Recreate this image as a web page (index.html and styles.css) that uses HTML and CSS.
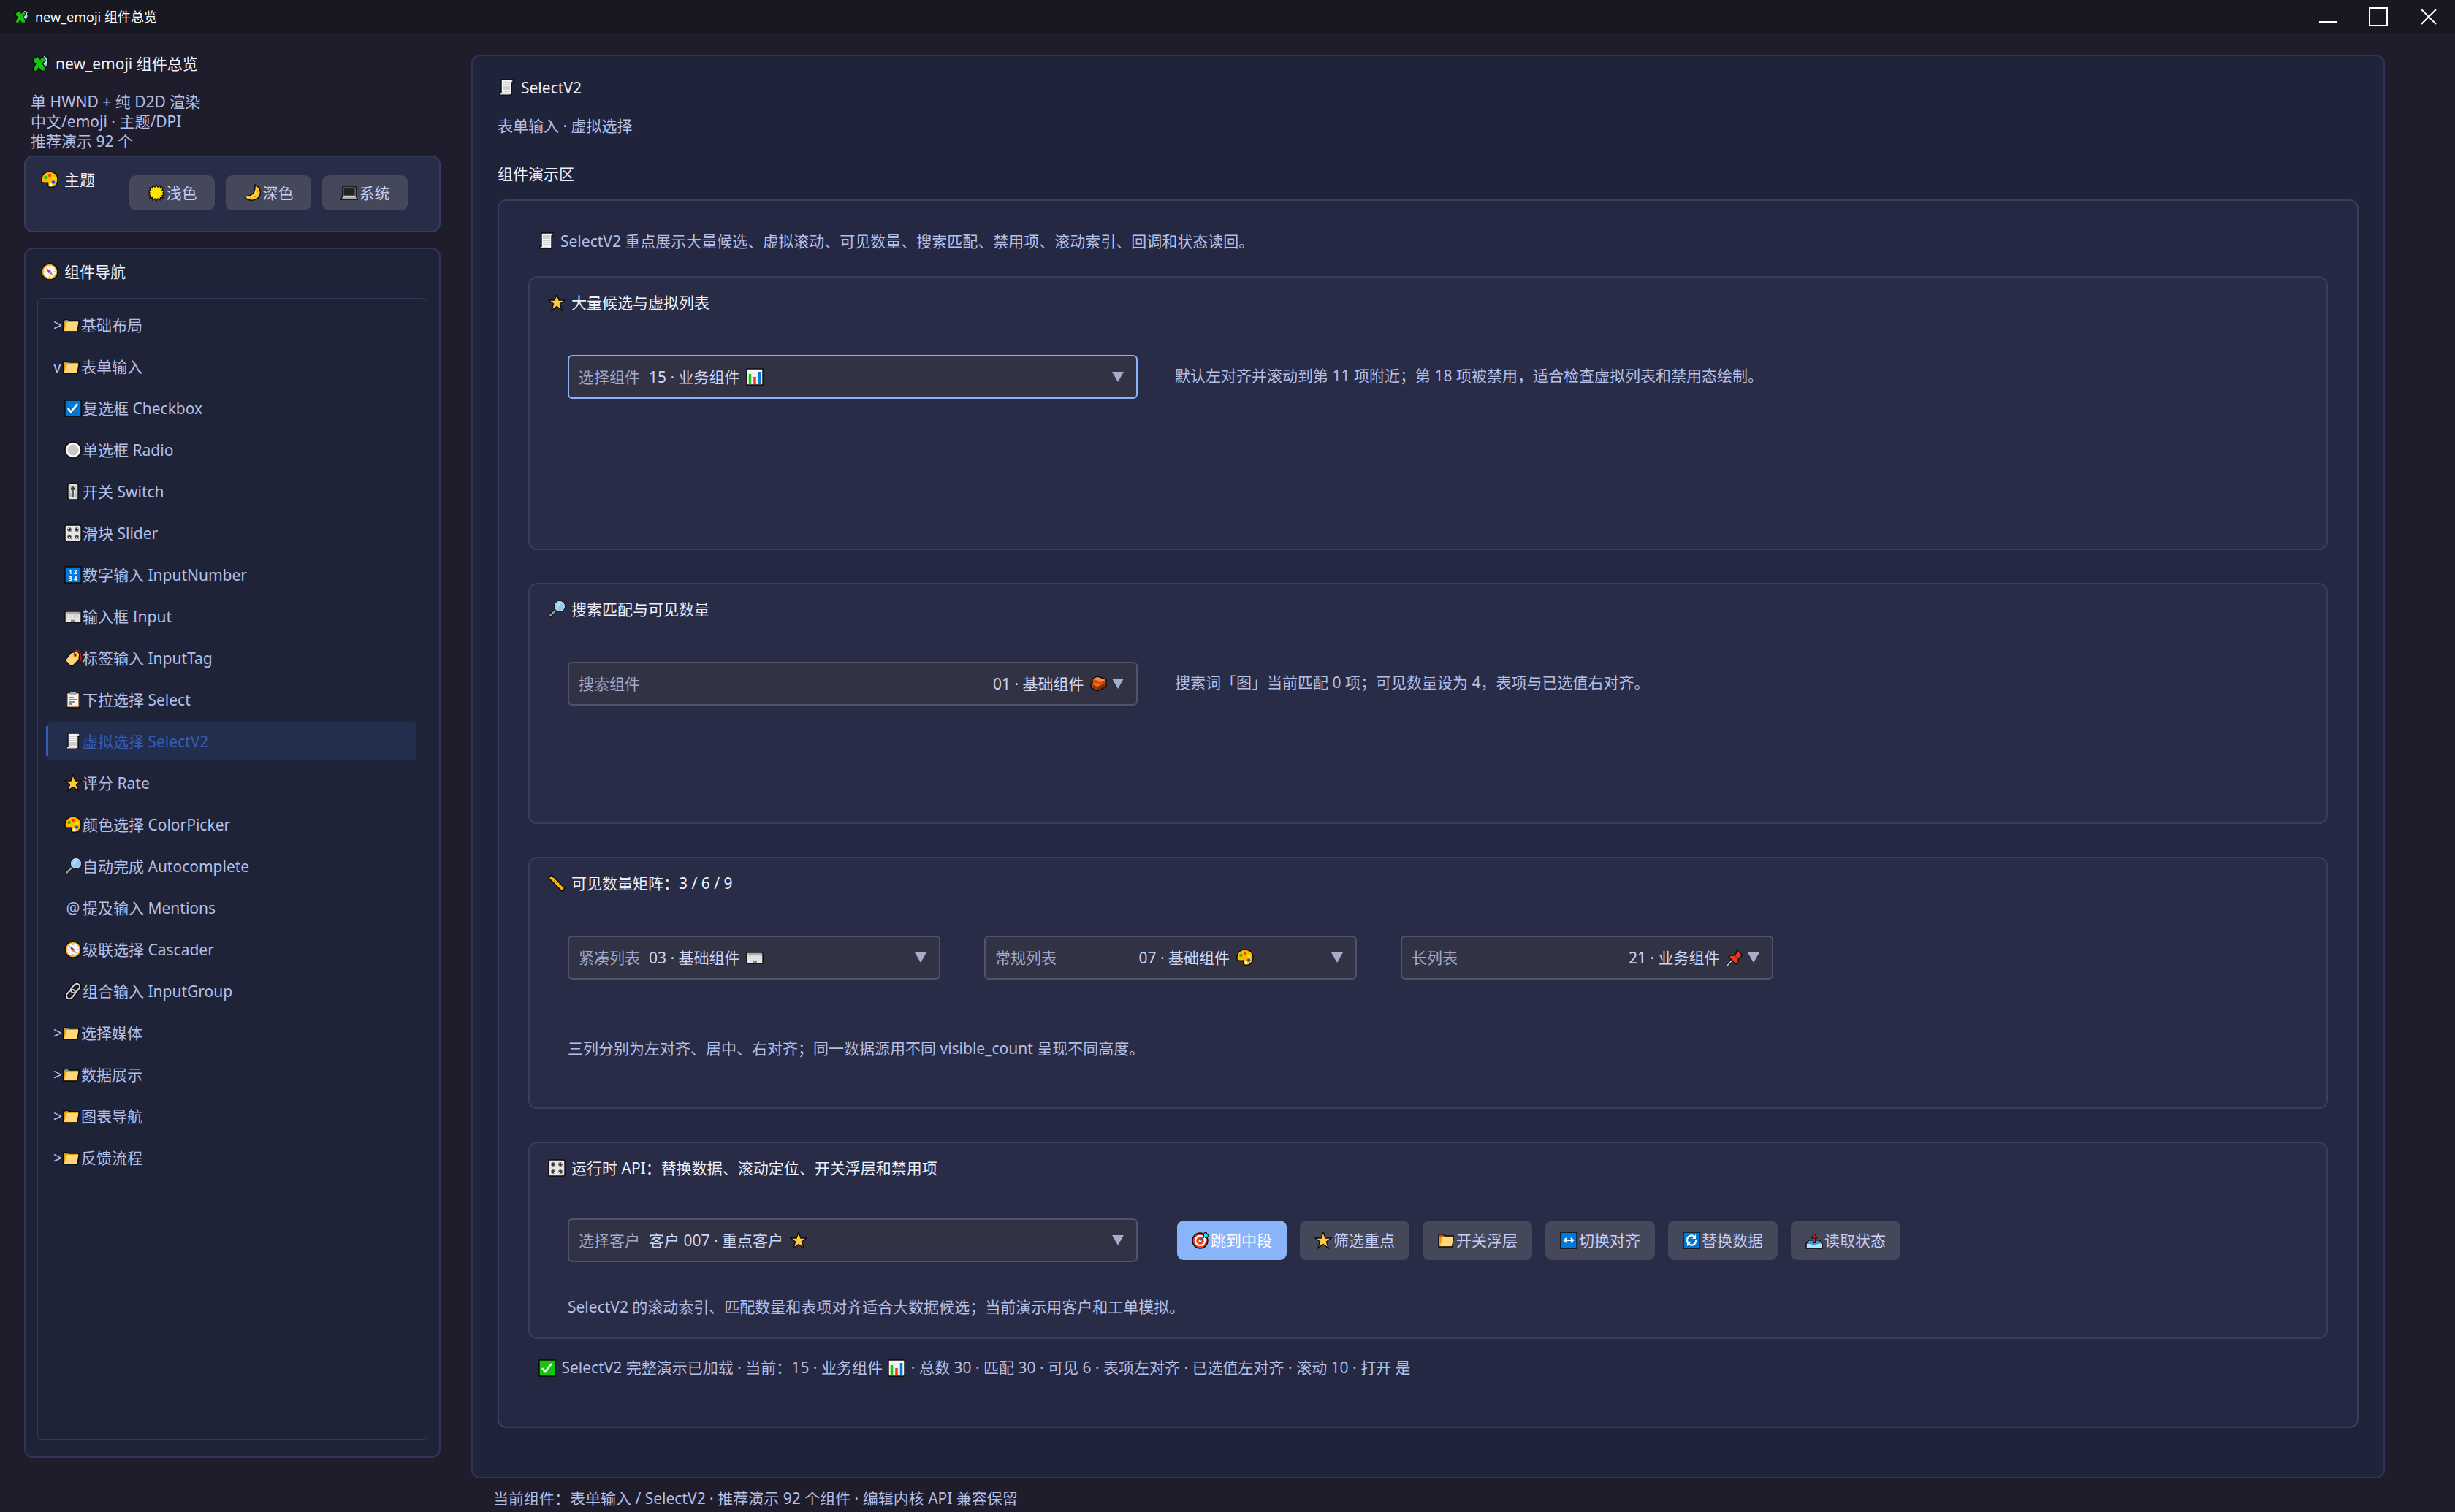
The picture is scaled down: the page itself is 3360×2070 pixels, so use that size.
FILE: index.html
```
<!DOCTYPE html>
<html lang="zh-CN">
<head>
    <meta charset="UTF-8">
    <meta name="viewport" content="width=device-width, initial-scale=1.0">
    <title>new_emoji 组件总览</title>
    <link rel="stylesheet" href="styles.css">
</head>
<body>

    <!-- Icon sprite -->
    <svg class="sprite" xmlns="http://www.w3.org/2000/svg" aria-hidden="true">
        <symbol id="puzzle" viewBox="0 0 24 24">
            <path d="M13 7l1-4 3-2 2 2 3 1-1 4 1 3-2 5-3 2-4-3z" fill="#b4d8ee" stroke="#0b0b0b" stroke-width="1.4"/>
            <path d="M18 6l-2 4M20 12l-2 3" stroke="#8fb0c6" stroke-width="1.5"/>
            <path d="M4 4l4-2 3 4 3-3 3 2 1 3-4 4 3 4 1 4-3 3-4-2-2-3-2 4-4 1-2-3 2-4 2-4-4-2 1-4z" fill="#16c60c" stroke="#0b0b0b" stroke-width="1.4"/>
            <path d="M11 7l2 2M3 19l1 2M15 20l2 1" stroke="#5b605d" stroke-width="2"/>
        </symbol>
        <symbol id="palette" viewBox="0 0 24 24">
            <path d="M12 1C5 1 1 6 1 11v4c2 2 5 1 8 1 2 1-1 5 2 6 7 2 12-3 12-11C23 5 18 1 12 1z" fill="#ffb900" stroke="#0b0b0b" stroke-width="1.4"/>
            <circle cx="12" cy="6" r="2.2" fill="#f03a17"/>
            <circle cx="6.500" cy="9" r="2.200" fill="#16c60c"/>
            <circle cx="17.500" cy="10" r="2.200" fill="#fde300"/>
            <circle cx="17" cy="15.500" r="2.200" fill="#0063e0"/>
            <circle cx="13.500" cy="19" r="2" fill="#fff"/>
        </symbol>
        <symbol id="sun" viewBox="0 0 24 24">
            <path d="M12 1l2 3 3-2 .5 3.500 3.500-.5-1 3.500 3 1-2 2.500 2 2.500-3 1 1 3.500-3.500-.5-.5 3.500-3-2-2 3-2-3-3 2-.5-3.500-3.500.5 1-3.500-3-1 2-2.500-2-2.500 3-1-1-3.500 3.500.5L7 2l3 2z" fill="#fde300" stroke="#0b0b0b" stroke-width="1.300"/>
            <circle cx="12" cy="12" r="6.500" fill="#ffe600"/>
        </symbol>
        <symbol id="moon" viewBox="0 0 24 24">
            <path d="M15 1c8 4 10 13 3 19-6 4-14 2-17-2 1-2 6-1 10-4 5-4 4-9 4-13z" fill="#ffc83d" stroke="#0b0b0b" stroke-width="1.400"/>
            <circle cx="19" cy="10" r="1.500" fill="#e8a520"/>
            <circle cx="15" cy="17" r="1.500" fill="#e8a520"/>
            <circle cx="9" cy="19" r="1" fill="#e8a520"/>
        </symbol>
        <symbol id="laptop" viewBox="0 0 24 24">
            <path d="M3 4h18v12l2 5H1l2-5z" fill="#cccccc" stroke="#0b0b0b" stroke-width="1.400"/>
            <path d="M4 5h16v11H4z" fill="#222" stroke="#777" stroke-width="1"/>
            <path d="M2 19h20" stroke="#888"/>
        </symbol>
        <symbol id="compass" viewBox="0 0 24 24">
            <circle cx="12" cy="12" r="11" fill="#f3a81c" stroke="#0b0b0b" stroke-width="1.300"/>
            <circle cx="12" cy="12" r="8.500" fill="#f7f7f7"/>
            <path d="M12 4v2M12 18v2M4 12h2M18 12h2" stroke="#999" stroke-width="1.200"/>
            <path d="M7 7l6.500 4-3 3z" fill="#e22b39"/>
            <path d="M17 18l-6.500-4 3-3z" fill="#999"/>
        </symbol>
        <symbol id="folder" viewBox="0 0 24 24">
            <path d="M1 5h6l2 1h13v4l-2 11H1z" fill="#e69f0b" stroke="#0b0b0b" stroke-width="1.600"/>
            <path d="M3 5h4l1 2H3z" fill="#3a96dd"/>
            <path d="M5 8h16l-2 12H2z" fill="#ffd67a"/>
        </symbol>
        <symbol id="folder-open" viewBox="0 0 24 24">
            <path d="M2 4h6l2 2h12v4l-2 11H2z" fill="#e69f0b" stroke="#0b0b0b" stroke-width="1.400"/>
            <path d="M3 5h5l1 2H3z" fill="#f03a17"/>
            <path d="M7 8h15l-2 12H4z" fill="#ffd67a"/>
        </symbol>
        <symbol id="check-blue" viewBox="0 0 24 24">
            <path d="M1 1h22v22H1z" fill="#0078d7" stroke="#0b0b0b" stroke-width="1.400"/>
            <path d="M5 12l4 5L18 6" fill="none" stroke="#fff" stroke-width="2.600"/>
        </symbol>
        <symbol id="check-green" viewBox="0 0 24 24">
            <path d="M1 1h22v22H1z" fill="#16c60c" stroke="#0b0b0b" stroke-width="1.400"/>
            <path d="M5 12l4 5L18 6" fill="none" stroke="#fff" stroke-width="2.600"/>
        </symbol>
        <symbol id="radio" viewBox="0 0 24 24">
            <circle cx="12" cy="12" r="11" fill="#cccccc" stroke="#0b0b0b" stroke-width="1.400"/>
            <circle cx="12" cy="12" r="8.500" fill="#c8c8c8" stroke="#fff" stroke-width="1.800"/>
        </symbol>
        <symbol id="level" viewBox="0 0 24 24">
            <rect x="5" y="1" width="14" height="22" rx="2" fill="#dedede" stroke="#0b0b0b" stroke-width="1.400"/>
            <path d="M7 5h3M7 9h3M7 12h3M7 15h3M7 18h3M14 5h3M14 9h3M14 12h3M14 15h3M14 18h3" stroke="#999"/>
            <path d="M12 4v16" stroke="#333" stroke-width="1.500"/>
            <path d="M9 8h6" stroke="#333" stroke-width="3"/>
        </symbol>
        <symbol id="knobs" viewBox="0 0 24 24">
            <rect x="1" y="1" width="22" height="22" rx="2" fill="#e6e6e6" stroke="#0b0b0b" stroke-width="1.400"/>
            <g fill="#333" stroke="#777" stroke-width="1">
                <circle cx="7" cy="7" r="2.500"/><circle cx="17" cy="7" r="2.500"/>
                <circle cx="7" cy="17" r="2.500"/><circle cx="17" cy="17" r="2.500"/>
            </g>
            <path d="M7 7l-2-2M17 7l2-2M7 17l2 2M17 17l-2 2" stroke="#fff"/>
            <path d="M9 10h1M19 10h1M9 20h1M19 20h1" stroke="#e74856"/>
        </symbol>
        <symbol id="keyboard" viewBox="0 0 24 24">
            <rect x="1" y="5" width="22" height="15" rx="1" fill="#e8e8e8" stroke="#0b0b0b" stroke-width="1.400"/>
            <path d="M2 7h20" stroke="#aaa" stroke-width="2"/>
            <path d="M3 10h18M3 13h18M4 16h16" stroke="#c4c4c4" stroke-dasharray="2 1"/>
            <path d="M9 18h6" stroke="#888" stroke-width="2.500"/>
            <path d="M2 7h2" stroke="#fde300"/><path d="M20 7h2" stroke="#e74856"/>
        </symbol>
        <symbol id="tag" viewBox="0 0 24 24">
            <path d="M1 15l8-10 8-3 4 4-1 8-9 9-3-1z" fill="#ffd67a" stroke="#0b0b0b" stroke-width="1.400"/>
            <circle cx="15" cy="8" r="3" fill="#e69f0b"/>
            <circle cx="15" cy="8" r="1.500" fill="#4a2410"/>
            <path d="M15 8c-3-5 0-7 4-6 4 2 4 8 3 14" fill="none" stroke="#b3231b" stroke-width="1.500"/>
        </symbol>
        <symbol id="clipboard" viewBox="0 0 24 24">
            <rect x="3" y="2" width="18" height="21" rx="2" fill="#b08a66" stroke="#0b0b0b" stroke-width="1.400"/>
            <path d="M5 4h14v17H5z" fill="#f5f5f5"/>
            <path d="M8 1h8v5H8z" fill="#aaa"/>
            <path d="M7 9h6M7 12h10M7 15h8M7 18h4" stroke="#666" stroke-width="1.300"/>
        </symbol>
        <symbol id="scroll" viewBox="0 0 24 24">
            <path d="M5 1h16v4h-2v17H3v-3h2z" fill="#f4f4f4" stroke="#0b0b0b" stroke-width="1.400"/>
            <path d="M7 5h10M7 8h10M7 11h10M7 14h10M7 17h10" stroke="#aaa" stroke-width="1.200"/>
            <path d="M18 3h2M4 21h12" stroke="#bbb"/>
        </symbol>
        <symbol id="star" viewBox="0 0 24 24">
            <path d="M12 1l3 8h8l-6.500 5 2.500 8.500-7-5-7 5L7.500 14 1 9h8z" fill="#ffc83d" stroke="#0b0b0b" stroke-width="1.400"/>
        </symbol>
        <symbol id="search" viewBox="0 0 24 24">
            <path d="M10 14l-8 8" stroke="#0b0b0b" stroke-width="5"/>
            <path d="M10 14l-7.500 7.500" stroke="#8d9aa0" stroke-width="2.600"/>
            <circle cx="16" cy="8" r="7.500" fill="#83c5f4" stroke="#0b0b0b"/>
            <circle cx="16" cy="8" r="6.300" fill="#8fcaf5" stroke="#c8d3da" stroke-width="1.200"/>
            <path d="M12 11c-1-5 2-8 6-7z" fill="#b9e0fa"/>
        </symbol>
        <symbol id="link" viewBox="0 0 24 24">
            <g fill="none" stroke="#0b0b0b" stroke-width="5">
                <rect x="8" y="4" width="14" height="8" rx="4" transform="rotate(-48 15 8)"/>
                <rect x="2" y="12" width="14" height="8" rx="4" transform="rotate(-48 9 16)"/>
            </g>
            <g fill="none" stroke="#cfcfcf" stroke-width="2.200">
                <rect x="8" y="4" width="14" height="8" rx="4" transform="rotate(-48 15 8)"/>
                <rect x="2" y="12" width="14" height="8" rx="4" transform="rotate(-48 9 16)"/>
            </g>
        </symbol>
        <symbol id="chart" viewBox="0 0 24 24">
            <path d="M1 1h22v22H1z" fill="#f5f5f5" stroke="#0b0b0b" stroke-width="1.400"/>
            <path d="M2 7h20M2 12h20M2 17h20" stroke="#ddd"/>
            <path d="M5.500 8v14" stroke="#16c60c" stroke-width="3.500"/>
            <path d="M12 12v10" stroke="#f03a17" stroke-width="3.500"/>
            <path d="M18.500 5v17" stroke="#0078d7" stroke-width="3.500"/>
        </symbol>
        <symbol id="brick" viewBox="0 0 24 24">
            <path d="M3 5l7-3 12 4v10l-12 6-9-5v-5l2-1z" fill="#da5110" stroke="#0b0b0b" stroke-width="1.400"/>
            <path d="M4 5l6-2 11 4-6 3z" fill="#ff8c4b"/>
            <path d="M15 10l6-3v8l-6 3z" fill="#ca4508"/>
            <path d="M2 13l8 3v5l-8-4z" fill="#8e3a14"/>
            <path d="M10 16l11-4v4l-11 5z" fill="#7a3010"/>
            <path d="M3 12l3-1 8 3-4 2z" fill="#f7701f"/>
        </symbol>
        <symbol id="ruler" viewBox="0 0 24 24">
            <path d="M1 5l4-4 18 18-4 4z" fill="#ffb900" stroke="#0b0b0b" stroke-width="1.500"/>
            <path d="M7 4l-2 2M10 7l-2 2M13 10l-2 2M16 13l-2 2M19 16l-2 2" stroke="#9c6c00"/>
        </symbol>
        <symbol id="pin" viewBox="0 0 24 24">
            <path d="M10 14l-8 9" stroke="#0b0b0b" stroke-width="3.500"/>
            <path d="M10 14l-8 9" stroke="#ddd" stroke-width="1.500"/>
            <path d="M15 1l8 8-3 2-3 3v5l-3 2L4 11l3-2h5l3-4z" fill="#f03a17" stroke="#0b0b0b" stroke-width="1.300"/>
            <path d="M12 9l4 4" stroke="#a51d0b" stroke-width="1.500"/>
        </symbol>
        <symbol id="target" viewBox="0 0 24 24">
            <circle cx="11.500" cy="12.500" r="10.500" fill="#f03a17" stroke="#0b0b0b" stroke-width="1.300"/>
            <circle cx="11.500" cy="12.500" r="6.500" fill="none" stroke="#fff" stroke-width="2.500"/>
            <circle cx="11.500" cy="12.500" r="2" fill="#fff"/>
            <path d="M12 12l7-7" stroke="#0b6ab0" stroke-width="2"/>
            <path d="M16 7l1-5 3-1 1 3 2 1-2 4z" fill="#31d2f7" stroke="#0b0b0b"/>
        </symbol>
        <symbol id="swap" viewBox="0 0 24 24">
            <path d="M1 1h22v22H1z" fill="#0078d7" stroke="#0b0b0b" stroke-width="1.400"/>
            <path d="M6 12h12M9 9l-3 3 3 3M15 9l3 3-3 3" fill="none" stroke="#fff" stroke-width="2"/>
        </symbol>
        <symbol id="refresh" viewBox="0 0 24 24">
            <path d="M1 1h22v22H1z" fill="#0078d7" stroke="#0b0b0b" stroke-width="1.400"/>
            <path d="M17 8c-4-5-11-2-11 4 0 2 1 4 3 5M8 17c5 4 11 0 10-6" fill="none" stroke="#fff" stroke-width="2.200"/>
            <path d="M18 4v6h-5zM6 20v-5h5z" fill="#fff"/>
        </symbol>
        <symbol id="outbox" viewBox="0 0 24 24">
            <path d="M5 12h14l4 5v6H1v-6z" fill="#b4e0f7" stroke="#0b0b0b" stroke-width="1.400"/>
            <path d="M6 13h12l3 4h-5c-1 3-7 3-8 0H3z" fill="#3a96dd"/>
            <path d="M12 6v10" stroke="#0b0b0b" stroke-width="4"/>
            <path d="M12 5v10" stroke="#e81224" stroke-width="2.200"/>
            <path d="M8 9l4-6 4 6z" fill="#e81224" stroke="#0b0b0b"/>
        </symbol>
        <symbol id="caret" viewBox="0 0 16 14"><path d="M0 0h16L8 14z" fill="#a6adc8"/></symbol>
    </svg>

    <header class="titlebar">
        <svg class="icon"><use href="#puzzle"/></svg>
        <span class="titlebar-text">new_emoji 组件总览</span>
        <div class="window-controls">
            <button type="button" aria-label="最小化"><svg viewBox="0 0 28 28"><path d="M2 21h24"/></svg></button>
            <button type="button" aria-label="最大化"><svg viewBox="0 0 28 28"><path d="M2 2h24v24H2z"/></svg></button>
            <button type="button" aria-label="关闭"><svg viewBox="0 0 28 28"><path d="M4 4l20 20M24 4L4 24"/></svg></button>
        </div>
    </header>

    <div class="layout">
        <aside class="sidebar">
            <h1 class="brand"><svg class="icon"><use href="#puzzle"/></svg>new_emoji 组件总览</h1>
            <p class="about">单 HWND + 纯 D2D 渲染<br>中文/emoji · 主题/DPI<br>推荐演示 92 个</p>

            <section class="theme">
                <h2 class="title"><svg class="icon"><use href="#palette"/></svg>主题</h2>
                <div class="theme-buttons">
                    <button type="button" class="btn"><svg class="icon"><use href="#sun"/></svg>浅色</button>
                    <button type="button" class="btn"><svg class="icon"><use href="#moon"/></svg>深色</button>
                    <button type="button" class="btn"><svg class="icon"><use href="#laptop"/></svg>系统</button>
                </div>
            </section>

            <nav class="nav">
                <h2 class="title"><svg class="icon"><use href="#compass"/></svg>组件导航</h2>
                <div class="tree">
                    <a class="group" href="#"><span class="arrow">&gt;</span><svg class="icon"><use href="#folder"/></svg>基础布局</a>
                    <a class="group" href="#"><span class="arrow">v</span><svg class="icon"><use href="#folder"/></svg>表单输入</a>
                    <a class="leaf" href="#"><svg class="icon"><use href="#check-blue"/></svg>复选框 Checkbox</a>
                    <a class="leaf" href="#"><svg class="icon"><use href="#radio"/></svg>单选框 Radio</a>
                    <a class="leaf" href="#"><svg class="icon"><use href="#level"/></svg>开关 Switch</a>
                    <a class="leaf" href="#"><svg class="icon"><use href="#knobs"/></svg>滑块 Slider</a>
                    <a class="leaf" href="#">
                        <svg class="icon numbers" viewBox="0 0 24 24">
                            <path d="M1 1h22v22H1z" fill="#0078d7" stroke="#0b0b0b" stroke-width="1.400"/>
                            <text x="6" y="11">1 2</text>
                            <text x="6" y="20">3 4</text>
                        </svg>数字输入 InputNumber</a>
                    <a class="leaf" href="#"><svg class="icon"><use href="#keyboard"/></svg>输入框 Input</a>
                    <a class="leaf" href="#"><svg class="icon"><use href="#tag"/></svg>标签输入 InputTag</a>
                    <a class="leaf" href="#"><svg class="icon"><use href="#clipboard"/></svg>下拉选择 Select</a>
                    <a class="leaf active" href="#"><svg class="icon"><use href="#scroll"/></svg>虚拟选择 SelectV2</a>
                    <a class="leaf" href="#"><svg class="icon"><use href="#star"/></svg>评分 Rate</a>
                    <a class="leaf" href="#"><svg class="icon"><use href="#palette"/></svg>颜色选择 ColorPicker</a>
                    <a class="leaf" href="#"><svg class="icon"><use href="#search"/></svg>自动完成 Autocomplete</a>
                    <a class="leaf" href="#"><span class="at">@</span>提及输入 Mentions</a>
                    <a class="leaf" href="#"><svg class="icon"><use href="#compass"/></svg>级联选择 Cascader</a>
                    <a class="leaf" href="#"><svg class="icon"><use href="#link"/></svg>组合输入 InputGroup</a>
                    <a class="group" href="#"><span class="arrow">&gt;</span><svg class="icon"><use href="#folder"/></svg>选择媒体</a>
                    <a class="group" href="#"><span class="arrow">&gt;</span><svg class="icon"><use href="#folder"/></svg>数据展示</a>
                    <a class="group" href="#"><span class="arrow">&gt;</span><svg class="icon"><use href="#folder"/></svg>图表导航</a>
                    <a class="group" href="#"><span class="arrow">&gt;</span><svg class="icon"><use href="#folder"/></svg>反馈流程</a>
                </div>
            </nav>
        </aside>

        <div class="content">
            <main class="panel">
                <h2 class="title"><svg class="icon"><use href="#scroll"/></svg>SelectV2</h2>
                <p class="subtitle">表单输入 · 虚拟选择</p>
                <h3 class="section-label">组件演示区</h3>

                <div class="demo">
                    <p class="intro"><svg class="icon"><use href="#scroll"/></svg>SelectV2 重点展示大量候选、虚拟滚动、可见数量、搜索匹配、禁用项、滚动索引、回调和状态读回。</p>

                    <section class="card card-list">
                        <h3 class="title"><svg class="icon"><use href="#star"/></svg>大量候选与虚拟列表</h3>
                        <div class="row">
                            <div class="field wide focused">
                                <label for="component">选择组件</label>
                                <div class="value">
                                    <select id="component"><option>15 · 业务组件</option></select>
                                    <svg class="icon"><use href="#chart"/></svg>
                                </div>
                                <svg class="caret"><use href="#caret"/></svg>
                            </div>
                            <p class="desc">默认左对齐并滚动到第 11 项附近；第 18 项被禁用，适合检查虚拟列表和禁用态绘制。</p>
                        </div>
                    </section>

                    <section class="card card-search">
                        <h3 class="title"><svg class="icon"><use href="#search"/></svg>搜索匹配与可见数量</h3>
                        <div class="row">
                            <div class="field wide">
                                <label for="search-component">搜索组件</label>
                                <div class="value right">
                                    <select id="search-component"><option>01 · 基础组件</option></select>
                                    <svg class="icon"><use href="#brick"/></svg>
                                </div>
                                <svg class="caret"><use href="#caret"/></svg>
                            </div>
                            <p class="desc">搜索词「图」当前匹配 0 项；可见数量设为 4，表项与已选值右对齐。</p>
                        </div>
                    </section>

                    <section class="card card-matrix">
                        <h3 class="title"><svg class="icon"><use href="#ruler"/></svg>可见数量矩阵：3 / 6 / 9</h3>
                        <div class="row matrix">
                            <div class="field">
                                <label for="compact">紧凑列表</label>
                                <div class="value">
                                    <select id="compact"><option>03 · 基础组件</option></select>
                                    <svg class="icon"><use href="#keyboard"/></svg>
                                </div>
                                <svg class="caret"><use href="#caret"/></svg>
                            </div>
                            <div class="field">
                                <label for="regular">常规列表</label>
                                <div class="value center">
                                    <select id="regular"><option>07 · 基础组件</option></select>
                                    <svg class="icon"><use href="#palette"/></svg>
                                </div>
                                <svg class="caret"><use href="#caret"/></svg>
                            </div>
                            <div class="field">
                                <label for="long">长列表</label>
                                <div class="value right">
                                    <select id="long"><option>21 · 业务组件</option></select>
                                    <svg class="icon"><use href="#pin"/></svg>
                                </div>
                                <svg class="caret"><use href="#caret"/></svg>
                            </div>
                        </div>
                        <p class="note">三列分别为左对齐、居中、右对齐；同一数据源用不同 visible_count 呈现不同高度。</p>
                    </section>

                    <section class="card card-api">
                        <h3 class="title"><svg class="icon"><use href="#knobs"/></svg>运行时 API：替换数据、滚动定位、开关浮层和禁用项</h3>
                        <div class="row">
                            <div class="field wide">
                                <label for="customer">选择客户</label>
                                <div class="value">
                                    <select id="customer"><option>客户 007 · 重点客户</option></select>
                                    <svg class="icon"><use href="#star"/></svg>
                                </div>
                                <svg class="caret"><use href="#caret"/></svg>
                            </div>
                            <div class="actions">
                                <button type="button" class="btn primary"><svg class="icon"><use href="#target"/></svg>跳到中段</button>
                                <button type="button" class="btn"><svg class="icon"><use href="#star"/></svg>筛选重点</button>
                                <button type="button" class="btn"><svg class="icon"><use href="#folder-open"/></svg>开关浮层</button>
                                <button type="button" class="btn"><svg class="icon"><use href="#swap"/></svg>切换对齐</button>
                                <button type="button" class="btn"><svg class="icon"><use href="#refresh"/></svg>替换数据</button>
                                <button type="button" class="btn"><svg class="icon"><use href="#outbox"/></svg>读取状态</button>
                            </div>
                        </div>
                        <p class="note">SelectV2 的滚动索引、匹配数量和表项对齐适合大数据候选；当前演示用客户和工单模拟。</p>
                    </section>

                    <p class="status"><svg class="icon"><use href="#check-green"/></svg> SelectV2 完整演示已加载 · 当前：15 · 业务组件 <svg class="icon"><use href="#chart"/></svg> · 总数 30 · 匹配 30 · 可见 6 · 表项左对齐 · 已选值左对齐 · 滚动 10 · 打开 是</p>
                </div>
            </main>
            <footer class="footer">当前组件：表单输入 / SelectV2 · 推荐演示 92 个组件 · 编辑内核 API 兼容保留</footer>
        </div>
    </div>

</body>
</html>
```
FILE: styles.css
```
* {
    box-sizing: border-box;
}

body {
    display: flex;
    flex-direction: column;
    margin: 0;
    min-height: 100vh;
    background: #1f1d2c;
    color: #b4bfe6;
    font-family: 'Noto Sans', 'Noto Sans CJK SC', sans-serif;
    font-size: 21px;
    line-height: 30px;
}

h1,
h2,
h3,
p {
    margin: 0;
    font-size: 21px;
    font-weight: 400;
}

a {
    color: inherit;
    text-decoration: none;
}

button,
select {
    font: inherit;
    color: inherit;
}

.sprite {
    position: absolute;
    width: 0;
    height: 0;
}

.icon {
    flex: none;
    width: 24px;
    height: 24px;
    vertical-align: -5px;
}

.numbers text {
    fill: #fff;
    font-size: 8px;
    font-weight: 700;
}

/* Title bar */
.titlebar {
    display: flex;
    align-items: center;
    height: 45px;
    padding: 0 16px 0 20px;
    background: #181822;
    color: #fff;
    font-size: 18px;
}

.titlebar .icon {
    width: 20px;
    height: 20px;
}

.titlebar-text {
    margin-left: 8px;
}

.window-controls {
    display: flex;
    gap: 13px;
    margin-left: auto;
}

.window-controls button {
    display: flex;
    align-items: center;
    justify-content: center;
    width: 56px;
    height: 44px;
    padding: 0;
    border: none;
    background: none;
}

.window-controls button:last-child {
    margin-right: -8px;
}

.window-controls svg {
    width: 28px;
    height: 28px;
    fill: none;
    stroke: #fff;
    stroke-width: 2;
}

/* Page columns */
.layout {
    display: flex;
    flex: 1;
    gap: 42px;
    padding: 0 96px 0 33px;
}

.sidebar {
    display: flex;
    flex: none;
    flex-direction: column;
    width: 570px;
    padding: 27px 0 74px;
}

.title,
.brand {
    display: flex;
    align-items: center;
    gap: 8px;
    color: #eef1fc;
}

.brand {
    padding-left: 11px;
}

.about {
    margin-top: 24px;
    padding-left: 9px;
    line-height: 27px;
}

.theme {
    display: flex;
    align-items: flex-start;
    justify-content: space-between;
    min-height: 105px;
    margin-top: 6px;
    padding: 16px 43px 0 21px;
    border: 2px solid #343d60;
    border-radius: 12px;
    background: #282c46;
}

.theme-buttons {
    display: flex;
    gap: 15px;
    padding-top: 9px;
}

.btn {
    display: flex;
    align-items: center;
    justify-content: center;
    width: 117px;
    height: 48px;
    gap: 2px;
    padding: 0;
    border: none;
    border-radius: 9px;
    background: #45475a;
    color: #c5cef5;
    white-space: nowrap;
    cursor: pointer;
}

.btn.primary {
    background: #89b4fa;
    color: #fff;
}

/* Navigation tree */
.nav {
    display: flex;
    flex: 1;
    flex-direction: column;
    margin-top: 21px;
    padding: 16px 16px 23px;
    border: 2px solid #2f3658;
    border-radius: 12px;
    background: #1e2337;
}

.nav .title {
    padding-left: 5px;
}

.tree {
    display: flex;
    flex: 1;
    flex-direction: column;
    gap: 6px;
    margin-top: 21px;
    padding: 10px 14px 10px 13px;
    border: 1px solid #323a5c;
    border-radius: 6px;
}

.group,
.leaf {
    display: flex;
    align-items: center;
    gap: 1px;
    height: 51px;
    padding-left: 8px;
    border-radius: 5px;
}

.leaf {
    padding-left: 23px;
}

.arrow {
    width: 12px;
}

.at {
    width: 24px;
    text-align: center;
}

.active {
    position: relative;
    background: #232e4c;
    color: #355db5;
}

.active::before {
    content: '';
    position: absolute;
    top: 5px;
    bottom: 5px;
    left: -2px;
    width: 3px;
    background: #355db5;
}

/* Main panel */
.content {
    display: flex;
    flex: 1;
    flex-direction: column;
    min-width: 0;
    padding-top: 30px;
}

.panel {
    padding: 28px 34px 67px;
    border: 2px solid #2f3658;
    border-radius: 12px;
    background: #1f243a;
}

.subtitle {
    margin-top: 22px;
}

.section-label {
    margin-top: 36px;
    color: #eef1fc;
}

.demo {
    margin-top: 20px;
    padding: 40px 40px 66px;
    border: 2px solid #363f63;
    border-radius: 12px;
    background: #242842;
}

.intro {
    display: flex;
    align-items: center;
    gap: 7px;
    padding-left: 13px;
}

.card {
    margin-top: 45px;
    padding: 19px 25px;
    border: 2px solid #363f63;
    border-radius: 12px;
    background: #282c46;
}

.card-list {
    min-height: 375px;
    margin-top: 33px;
}

.card-search {
    min-height: 330px;
}

.card-matrix {
    min-height: 345px;
}

.card-api {
    min-height: 270px;
}

.row {
    display: flex;
    align-items: center;
    gap: 51px;
    margin-top: 57px;
    padding-left: 27px;
}

.card-api .row {
    margin-top: 54px;
}

.matrix {
    gap: 60px;
}

.desc {
    padding-bottom: 4px;
}

.field {
    display: flex;
    align-items: center;
    width: 510px;
    height: 60px;
    padding: 0 17px 0 13px;
    border: 2px solid #50536a;
    border-radius: 6px;
    background: #313244;
}

.wide {
    width: 780px;
}

.focused {
    border-color: #89b4fa;
}

.field label {
    flex: none;
    margin-right: 12px;
    color: #a2a9c9;
}

.value {
    display: flex;
    flex: 1;
    align-items: center;
    gap: 8px;
}

.value.center {
    justify-content: center;
}

.value.right {
    justify-content: flex-end;
}

.value select {
    padding: 0;
    border: none;
    outline: none;
    appearance: none;
    background: transparent;
    color: #cdd6f4;
}

.value option {
    background: #313244;
}

.caret {
    flex: none;
    width: 16px;
    height: 14px;
    margin-left: 6px;
}

.actions {
    display: flex;
    gap: 18px;
    padding-left: 3px;
}

.actions .btn {
    width: 150px;
    height: 54px;
}

.note {
    padding-left: 27px;
}

.card-matrix .note {
    margin-top: 79px;
}

.card-api .note {
    margin-top: 46px;
}

.status {
    margin-top: 24px;
    padding-left: 12px;
}

.status .icon {
    margin: 0 2px;
}

.footer {
    padding: 12px 0 0 30px;
}
```
